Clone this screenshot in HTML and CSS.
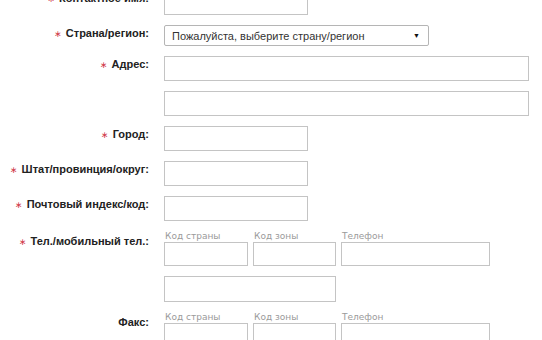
FILE: index.html
```html
<!DOCTYPE html>
<html lang="ru">
<head>
    <meta charset="UTF-8">
    <meta name="viewport" content="width=device-width, initial-scale=1.0">
    <title>Адрес доставки</title>
    <link rel="stylesheet" href="styles.css">
</head>
<body>
    <div class="address-form">
        <div class="row">
            <label class="label"><span class="req">&lowast;</span> Контактное имя:</label>
            <div class="field"><input type="text" class="input mid"></div>
        </div>
        <div class="row">
            <label class="label"><span class="req">&lowast;</span> Страна/регион:</label>
            <div class="field">
                <div class="select">
                    <span>Пожалуйста, выберите страну/регион</span>
                    <span class="arrow">&#9660;</span>
                </div>
            </div>
        </div>
        <div class="row">
            <label class="label"><span class="req">&lowast;</span> Адрес:</label>
            <div class="field stack">
                <input type="text" class="input wide">
                <input type="text" class="input wide">
            </div>
        </div>
        <div class="row">
            <label class="label"><span class="req">&lowast;</span> Город:</label>
            <div class="field"><input type="text" class="input mid"></div>
        </div>
        <div class="row">
            <label class="label"><span class="req">&lowast;</span> Штат/провинция/округ:</label>
            <div class="field"><input type="text" class="input mid"></div>
        </div>
        <div class="row">
            <label class="label"><span class="req">&lowast;</span> Почтовый индекс/код:</label>
            <div class="field"><input type="text" class="input mid"></div>
        </div>
        <div class="row">
            <label class="label phone-label"><span class="req">&lowast;</span> Тел./мобильный тел.:</label>
            <div class="field stack">
                <div class="phone">
                    <div class="part">
                        <span class="hint">Код страны</span>
                        <input type="text" class="input code">
                    </div>
                    <div class="part">
                        <span class="hint">Код зоны</span>
                        <input type="text" class="input zone">
                    </div>
                    <div class="part">
                        <span class="hint">Телефон</span>
                        <input type="text" class="input number">
                    </div>
                </div>
                <input type="text" class="input mobile">
            </div>
        </div>
        <div class="row">
            <label class="label phone-label">Факс:</label>
            <div class="field">
                <div class="phone">
                    <div class="part">
                        <span class="hint">Код страны</span>
                        <input type="text" class="input code">
                    </div>
                    <div class="part">
                        <span class="hint">Код зоны</span>
                        <input type="text" class="input zone">
                    </div>
                    <div class="part">
                        <span class="hint">Телефон</span>
                        <input type="text" class="input number">
                    </div>
                </div>
            </div>
        </div>
    </div>
</body>
</html>
```

FILE: styles.css
```css
body {
    margin: 0;
    background: #fff;
    font-family: "Liberation Sans", Arial, sans-serif;
    color: #222;
}

.address-form {
    margin-top: -10px;
}

.row {
    display: grid;
    grid-template-columns: 149px 1fr;
    column-gap: 15px;
    margin-bottom: 10px;
}

.label {
    text-align: right;
    font-size: 11px;
    font-weight: bold;
    line-height: 16px;
    color: #222;
    white-space: nowrap;
}

.phone-label {
    padding-top: 2px;
}

.req {
    font-family: "DejaVu Sans", sans-serif;
    color: #d03a4a;
    font-size: 9px;
    font-weight: normal;
    margin-right: 1px;
}

.field {
    display: flex;
}

.stack {
    flex-direction: column;
    gap: 10px;
}

.input {
    display: block;
    box-sizing: border-box;
    height: 25px;
    margin: 0;
    padding: 0 5px;
    border: 1px solid #c4c4c4;
    background: #fff;
    font-size: 12px;
}

.mid {
    width: 144px;
}

.wide {
    width: 365px;
}

.select {
    box-sizing: border-box;
    width: 265px;
    height: 21px;
    border: 1px solid #b5b5b5;
    border-radius: 2px;
    display: flex;
    align-items: center;
    justify-content: space-between;
    padding: 0 8px 0 7px;
    font-size: 11px;
    color: #333;
}

.arrow {
    font-size: 7px;
    color: #111;
}

.phone {
    display: flex;
    gap: 5px;
}

.part {
    display: flex;
    flex-direction: column;
}

.hint {
    font-family: "DejaVu Sans", Verdana, sans-serif;
    font-size: 9px;
    line-height: 11px;
    color: #9a9a9a;
    padding-left: 1px;
}

.code {
    width: 84px;
    height: 24px;
}

.zone {
    width: 83px;
    height: 24px;
}

.number {
    width: 149px;
    height: 24px;
}

.mobile {
    width: 172px;
    height: 26px;
}
```
